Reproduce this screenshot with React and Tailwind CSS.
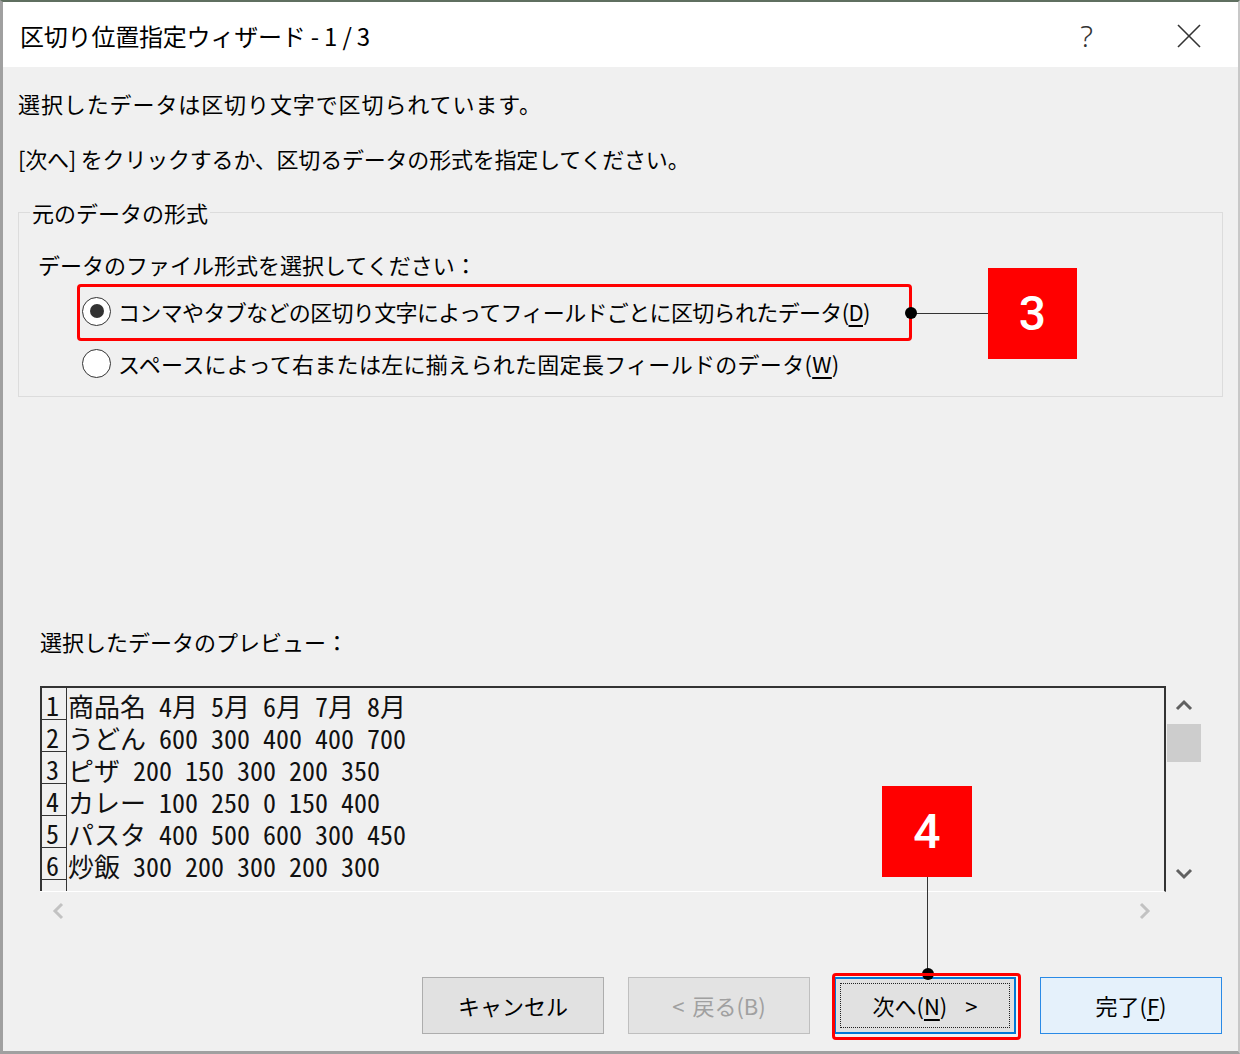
import React from "react";

const ui = { fontFamily: '"Noto Sans CJK JP", "Noto Sans", sans-serif' };
const mono = { fontFamily: '"Noto Sans Mono CJK JP", "Noto Sans CJK JP", monospace' };

const rows = [
  "商品名 4月 5月 6月 7月 8月",
  "うどん 600 300 400 400 700",
  "ピザ 200 150 300 200 350",
  "カレー 100 250 0 150 400",
  "パスタ 400 500 600 300 450",
  "炒飯 300 200 300 200 300",
  "",
];

function Chevron({ dir, color }) {
  const pts = {
    up: "2,11 9,4 16,11",
    down: "2,4 9,11 16,4",
    left: "11,2 4,9 11,16",
    right: "4,2 11,9 4,16",
  }[dir];
  const vertical = dir === "up" || dir === "down";
  return (
    <svg
      width={vertical ? 18 : 15}
      height={vertical ? 15 : 18}
      viewBox={vertical ? "0 0 18 15" : "0 0 15 18"}
    >
      <polyline points={pts} fill="none" stroke={color} strokeWidth="3" strokeLinejoin="miter" />
    </svg>
  );
}

function Radio({ checked }) {
  return (
    <div className="w-[29px] h-[29px] rounded-full border-[1.5px] border-[#333] bg-white flex items-center justify-center shrink-0">
      {checked && <div className="w-[14px] h-[14px] rounded-full bg-[#333]" />}
    </div>
  );
}

export default function App() {
  return (
    <div
      className="relative w-[1240px] h-[1054px] bg-[#f0f0f0] border-l-[3px] border-r-[2px] border-b-[3px] border-t-[2px] border-l-[#a0a0a0] border-r-[#c8c8c8] border-b-[#a0a0a0] border-t-[#5f6f60] text-black overflow-hidden"
      style={ui}
    >
      {/* Title bar */}
      <div className="h-[65px] bg-white flex items-center pl-[17px] pt-[2px]">
        <div className="text-[24px] leading-none tracking-[-0.2px]">区切り位置指定ウィザード - 1 / 3</div>
        <div className="ml-auto flex items-center">
          <div className="text-[30px] font-light text-[#333] leading-none mr-[84px]" style={{ fontFamily: '"Noto Sans", sans-serif' }}>?</div>
          <svg width="24" height="24" viewBox="0 0 24 24" className="mr-[37px]">
            <line x1="1" y1="1" x2="23" y2="23" stroke="#333" strokeWidth="1.6" />
            <line x1="23" y1="1" x2="1" y2="23" stroke="#333" strokeWidth="1.6" />
          </svg>
        </div>
      </div>

      {/* Intro text */}
      <div className="pl-[15px] pt-[9px] text-[22px]">
        <div className="h-[55px] flex items-center tracking-[0.9px]">選択したデータは区切り文字で区切られています。</div>
        <div className="h-[55px] flex items-center tracking-[-0.2px]">[次へ] をクリックするか、区切るデータの形式を指定してください。</div>
      </div>

      {/* Group box */}
      <fieldset className="mt-[12px] ml-[15px] w-[1205px] border border-[#dcdcdc] pl-[19px] pb-[7px] text-[22px]">
        <legend className="ml-[-8px] px-[2px] leading-[28px]">元のデータの形式</legend>
        <div className="mt-[20px] h-[36px] flex items-center">データのファイル形式を選択してください：</div>
        <div className="mt-[3px] h-[52px] flex items-center pl-[44px] gap-[7px]">
          <Radio checked />
          <span className="tracking-[-0.65px]">
            コンマやタブなどの区切り文字によってフィールドごとに区切られたデータ(<span className="underline underline-offset-[4px]">D</span>)
          </span>
        </div>
        <div className="h-[52px] flex items-center pl-[44px] gap-[7px]">
          <Radio />
          <span className="tracking-[0.3px]">
            スペースによって右または左に揃えられた固定長フィールドのデータ(<span className="underline underline-offset-[4px]">W</span>)
          </span>
        </div>
      </fieldset>

      {/* Preview label */}
      <div className="mt-[228px] pl-[37px] h-[32px] flex items-center text-[22px]">選択したデータのプレビュー：</div>

      {/* Preview */}
      <div className="mt-[29px] ml-[37px] w-[1162px] h-[244px] flex flex-col">
        <div className="flex h-[206px]">
          <div className="w-[1126px] h-[206px] border-t-2 border-r-2 border-b border-t-[#333] border-r-[#333] border-b-white overflow-hidden">
            {rows.map((r, i) => (
              <div key={i} className="flex h-[32px] text-[26px] text-[#111]" style={mono}>
                <div className="w-[27px] shrink-0 border-l-2 border-r border-b border-[#333] pl-[4px] flex items-end leading-[28px]">
                  {i < 6 ? i + 1 : ""}
                </div>
                <div className="pl-[1px] flex items-end leading-[28px] whitespace-pre">{r}</div>
              </div>
            ))}
          </div>
          <div className="w-[36px] h-[206px] flex flex-col items-center">
            <div className="h-[38px] w-full flex items-center justify-center">
              <Chevron dir="up" color="#606060" />
            </div>
            <div className="w-[34px] h-[38px] bg-[#cdcdcd]" />
            <div className="flex-1" />
            <div className="h-[38px] w-full flex items-center justify-center">
              <Chevron dir="down" color="#606060" />
            </div>
          </div>
        </div>
        <div className="w-[1126px] h-[38px] flex items-center justify-between">
          <div className="w-[36px] flex justify-center">
            <Chevron dir="left" color="#c2c2c2" />
          </div>
          <div className="w-[36px] mr-[4px] flex justify-center">
            <Chevron dir="right" color="#c2c2c2" />
          </div>
        </div>
      </div>

      {/* Buttons */}
      <div className="mt-[47px] pr-[16px] flex justify-end gap-[24px] text-[22px]">
        <div className="w-[182px] h-[57px] bg-[#e1e1e1] border border-[#adadad] flex items-center justify-center">キャンセル</div>
        <div className="w-[182px] h-[57px] bg-[#e3e3e3] border border-[#bfbfbf] flex items-center justify-center text-[#a0a0a0] gap-[8px]">
          <span>&lt;</span>
          <span>戻る(B)</span>
        </div>
        <div className="w-[182px] h-[57px] bg-[#e1e1e1] border-2 border-[#0078d7] p-[4px] flex">
          <div className="flex-1 border border-dotted border-[#222] flex items-center justify-center">
            <span>
              次へ(<span className="underline underline-offset-[4px]">N</span>)
            </span>
            <span className="ml-[18px]">&gt;</span>
          </div>
        </div>
        <div className="w-[182px] h-[57px] bg-[#e5f1fb] border border-[#2a8ae6] flex items-center justify-center">
          完了(<span className="underline underline-offset-[4px]">F</span>)
        </div>
      </div>

      {/* Annotations (overlays) */}
      <div className="absolute left-[74px] top-[282px] w-[835px] h-[57px] border-[3px] border-[#ff0000] rounded-[4px]" />
      <div className="absolute left-[908px] top-[311px] w-[77px] h-[1px] bg-[#333]" />
      <div className="absolute left-[902px] top-[305px] w-[12px] h-[12px] rounded-full bg-black" />
      <div className="absolute left-[985px] top-[266px] w-[89px] h-[91px] bg-[#ff0000] flex items-center justify-center text-white text-[48px] font-medium leading-none" style={{ fontFamily: "Roboto, sans-serif" }}>3</div>

      <div className="absolute left-[879px] top-[784px] w-[90px] h-[91px] bg-[#ff0000] flex items-center justify-center text-white text-[48px] font-medium leading-none" style={{ fontFamily: "Roboto, sans-serif" }}>4</div>
      <div className="absolute left-[924px] top-[875px] w-[1px] h-[97px] bg-[#333]" />
      <div className="absolute left-[919px] top-[966px] w-[12px] h-[12px] rounded-full bg-black" />
      <div className="absolute left-[829px] top-[971px] w-[189px] h-[67px] border-[3px] border-[#ff0000] rounded-[4px]" />
    </div>
  );
}
